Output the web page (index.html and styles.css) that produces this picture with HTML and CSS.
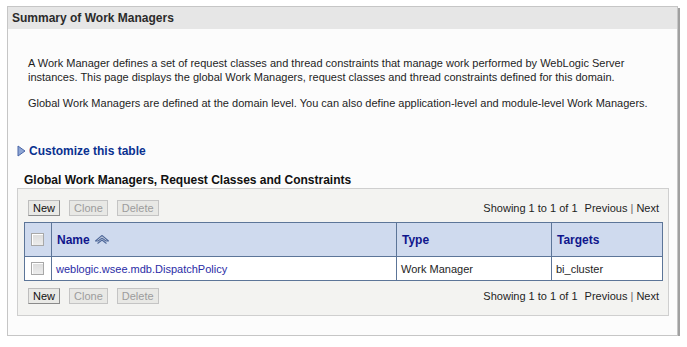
FILE: index.html
```html
<!DOCTYPE html>
<html>
<head>
<meta charset="utf-8">
<link rel="stylesheet" href="styles.css">
</head>
<body>
<div class="panel">
  <div class="panel-head">Summary of Work Managers</div>
  <div class="panel-body">
    <p class="intro">A Work Manager defines a set of request classes and thread constraints that manage work performed by WebLogic Server instances. This page displays the global Work Managers, request classes and thread constraints defined for this domain.</p>
    <p class="intro second">Global Work Managers are defined at the domain level. You can also define application-level and module-level Work Managers.</p>

    <div class="customize">
      <svg class="tri" width="9" height="12" viewBox="0 0 9 12"><path d="M1 1 L8 6 L1 11 Z" fill="#8fa6d4" stroke="#4a67a8" stroke-width="1"/></svg>
      <span>Customize this table</span>
    </div>

    <div class="tbl-title">Global Work Managers, Request Classes and Constraints</div>
    <div class="tbl-box">
      <div class="toolbar">
        <div class="btns">
          <span class="btn">New</span>
          <span class="btn dis">Clone</span>
          <span class="btn dis">Delete</span>
        </div>
        <div class="pager">Showing 1 to 1 of 1 <span class="prev">Previous</span> <span class="sep">|</span> <span>Next</span></div>
      </div>
      <table class="grid">
        <thead>
          <tr>
            <th class="cb"><span class="chk"></span></th>
            <th class="c-name">Name <svg class="sort" width="16" height="11" viewBox="0 0 16 11"><path d="M1.5 7 L8 1.5 L14.5 7 L12 7 L8 4 L4 7 Z" fill="#f2f5fb" stroke="#50699a" stroke-width="1.1" stroke-linejoin="round"/><path d="M3.5 9.5 L8 6 L12.5 9.5" fill="none" stroke="#50699a" stroke-width="1.1"/></svg></th>
            <th class="c-type">Type</th>
            <th class="c-tgt">Targets</th>
          </tr>
        </thead>
        <tbody>
          <tr>
            <td class="cb"><span class="chk"></span></td>
            <td><span class="link">weblogic.wsee.mdb.DispatchPolicy</span></td>
            <td>Work Manager</td>
            <td>bi_cluster</td>
          </tr>
        </tbody>
      </table>
      <div class="toolbar bottom">
        <div class="btns">
          <span class="btn">New</span>
          <span class="btn dis">Clone</span>
          <span class="btn dis">Delete</span>
        </div>
        <div class="pager">Showing 1 to 1 of 1 <span class="prev">Previous</span> <span class="sep">|</span> <span>Next</span></div>
      </div>
    </div>
  </div>
</div>
</body>
</html>
```
FILE: styles.css
```css
html, body {
  margin: 0;
  padding: 0;
  background: #ffffff;
}
body {
  font-family: "Liberation Sans", Arial, sans-serif;
  font-size: 11px;
  color: #1e1e1e;
  padding: 6px 0 0 7px;
}
.panel {
  width: 671px;
  height: 330px;
  border: 1px solid #c6c6c6;
  box-shadow: 2px 2px 0 #a0a0a0;
  background: #fcfcfc;
  box-sizing: border-box;
}
.panel-head {
  height: 22px;
  line-height: 22px;
  background: #e6e6e6;
  padding-left: 4px;
  font-weight: bold;
  font-size: 12px;
  color: #2b2b2b;
}
.panel-body {
  padding: 27px 0 0 9px;
}
.intro {
  margin: 0;
  padding-left: 11px;
  padding-right: 18px;
  line-height: 14px;
}
.intro.second {
  margin-top: 12px;
}
.customize {
  margin-top: 33px;
  display: flex;
  align-items: center;
  gap: 3px;
  font-weight: bold;
  font-size: 12px;
  color: #0a3190;
  height: 16px;
}
.tri {
  display: block;
}
.tbl-title {
  margin-top: 14px;
  padding-left: 7px;
  font-weight: bold;
  font-size: 12px;
  color: #111;
  height: 15px;
  line-height: 15px;
}
.tbl-box {
  margin-top: 0;
  width: 652px;
  height: 128px;
  box-sizing: border-box;
  border: 1px solid #cfcfcf;
  background: #f3f3f1;
  padding: 10px 6px 0 6px;
}
.toolbar {
  display: flex;
  justify-content: space-between;
  align-items: center;
  height: 17px;
}
.toolbar.bottom {
  margin-top: 6px;
}
.btns {
  display: flex;
  gap: 9px;
  padding-left: 4px;
}
.btn {
  display: inline-block;
  height: 16px;
  line-height: 14px;
  box-sizing: border-box;
  padding: 0 4px;
  border: 1px solid #bdbdbd;
  border-right-color: #8a8a8a;
  border-bottom-color: #8a8a8a;
  background: #e9e9e6;
  font-size: 11px;
  color: #111;
}
.btn.dis {
  color: #9c9c9c;
  border-color: #c4c4c4;
  background: #e8e8e5;
}
.pager {
  padding-right: 3px;
  color: #1e1e1e;
  font-size: 11px;
}
.prev {
  margin-left: 4px;
}
.sep {
  color: #666;
}
.grid {
  margin-top: 6px;
  width: 639px;
  border-collapse: collapse;
  border: 1px solid #5c7598;
}
.grid th {
  height: 33px;
  background: #cfdaee;
  text-align: left;
  font-weight: bold;
  font-size: 12px;
  color: #10168c;
  border: 1px solid #5c7598;
  padding: 0 0 0 5px;
  vertical-align: middle;
}
.grid td {
  height: 23px;
  background: #ffffff;
  border: 1px solid #5c7598;
  padding: 0 0 0 4px;
  vertical-align: middle;
}
.grid .cb {
  width: 20px;
  padding: 0 0 0 6px;
}
.c-name { width: 339px; }
.c-type { width: 149px; }
.sort {
  vertical-align: -1px;
  margin-left: 1px;
}
.chk {
  display: block;
  width: 11px;
  height: 11px;
  border: 1px solid #a8a8a8;
  background: linear-gradient(#dcdcdc, #ececec);
  box-shadow: inset 1px 1px 0 #ffffff;
}
.link {
  color: #2a2ca6;
}
```
